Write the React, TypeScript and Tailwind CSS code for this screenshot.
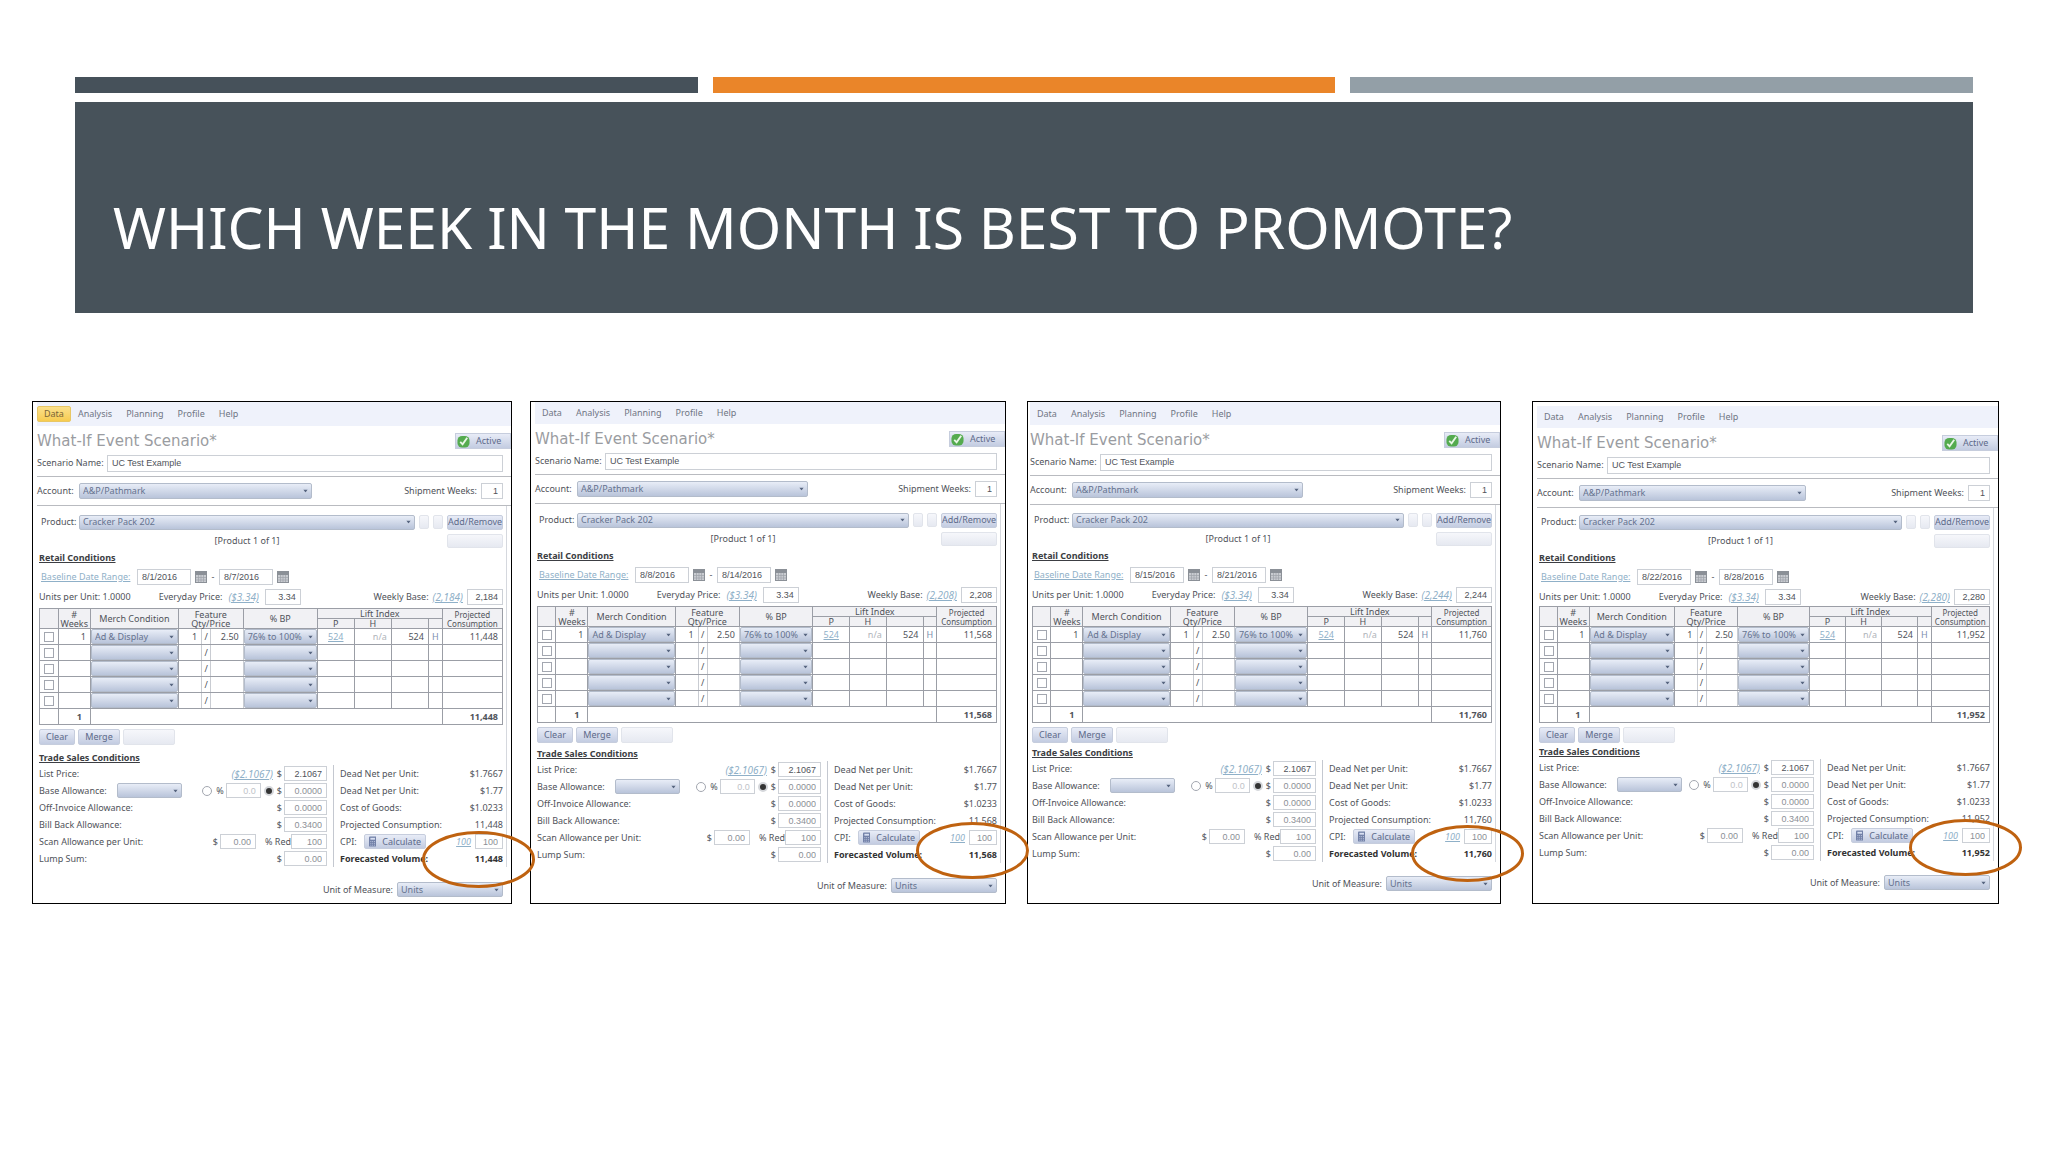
import React, { useId } from "react";
import clsx from "clsx";

interface Scenario {
  week: string;
  start: string;
  end: string;
  weeklyBase: string;
  baseLink: string;
  volume: string;
  activeTab?: string;
  // spacing differs a little from one capture to the next
  panel: string;
  inset: string;
  menu: string;
  product: string;
  table: string;
  head: string;
  trade: string;
  measure: string;
  ring: string;
}

const scenarios: Scenario[] = [
  {
    week: "week-1",
    start: "8/1/2016",
    end: "8/7/2016",
    weeklyBase: "2,184",
    baseLink: "(2,184)",
    volume: "11,448",
    activeTab: "Data",
    panel: "mr-[18px]",
    inset: "pl-1",
    menu: "h-6",
    product: "pt-2",
    table: "mt-[3px]",
    head: "h-[10px]",
    trade: "mt-[7px]",
    measure: "mt-[15px]",
    ring: "top-[429px] -right-6",
  },
  {
    week: "week-2",
    start: "8/8/2016",
    end: "8/14/2016",
    weeklyBase: "2,208",
    baseLink: "(2,208)",
    volume: "11,568",
    panel: "mr-[21px]",
    inset: "pl-1",
    menu: "h-[22px]",
    product: "pt-2",
    table: "mt-[3px]",
    head: "h-[9px]",
    trade: "mt-[5px]",
    measure: "mt-[15px]",
    ring: "top-[420px] -right-6",
  },
  {
    week: "week-3",
    start: "8/15/2016",
    end: "8/21/2016",
    weeklyBase: "2,244",
    baseLink: "(2,244)",
    volume: "11,760",
    panel: "mr-[31px]",
    inset: "pl-[2px]",
    menu: "h-[23px]",
    product: "pt-[7px]",
    table: "mt-[3px]",
    head: "h-[9px]",
    trade: "mt-1",
    measure: "mt-[14px]",
    ring: "top-[423px] -right-6",
  },
  {
    week: "week-4",
    start: "8/22/2016",
    end: "8/28/2016",
    weeklyBase: "2,280",
    baseLink: "(2,280)",
    volume: "11,952",
    panel: "",
    inset: "pl-1",
    menu: "mt-1 h-[22px]",
    product: "pt-[6px]",
    table: "mt-px",
    head: "h-[9px]",
    trade: "mt-[3px]",
    measure: "mt-[14px]",
    ring: "top-[417px] -right-6",
  },
];

const menuItems = ["Data", "Analysis", "Planning", "Profile", "Help"];

const Dropdown = ({
  id,
  label,
  value = "",
  className,
}: {
  id?: string;
  label?: string;
  value?: string;
  className?: string;
}) => {
  return (
    <span className={clsx("relative block", className)}>
      <select
        id={id}
        aria-label={label}
        defaultValue={value}
        className="block h-full w-full appearance-none rounded-[2px] border border-[#b3bccb] bg-linear-to-b from-[#e8edf7] to-[#b9c4da] pl-[3px] text-[9px] leading-3 text-[#65728f]"
      >
        <option value={value}>{value}</option>
      </select>
      <svg
        viewBox="0 0 6 4"
        className="pointer-events-none absolute top-1/2 right-1 h-[3px] w-[5px] -translate-y-1/2"
      >
        <path d="M0 0h6L3 4z" fill="#56647f" />
      </svg>
    </span>
  );
};

const TextBox = ({
  id,
  label,
  value,
  className,
}: {
  id?: string;
  label?: string;
  value: string;
  className?: string;
}) => {
  return (
    <input
      id={id}
      aria-label={label}
      defaultValue={value}
      className={clsx(
        "block min-w-0 border border-[#ccd0d6] bg-white px-1 font-['Liberation_Sans',sans-serif] text-[9px] leading-3",
        className,
      )}
    />
  );
};

const CalendarIcon = () => (
  <svg viewBox="0 0 12 12" className="h-3 w-3">
    <rect x="0.5" y="0.5" width="11" height="11" fill="#c9ccd1" stroke="#8b9097" />
    <rect x="1" y="1" width="10" height="3" fill="#8b9097" />
    <path d="M3.5 4v7M6 4v7M8.500 4v7M1 6.500h10M1 9h10" stroke="#9da2a9" strokeWidth="0.700" />
  </svg>
);

const CheckIcon = () => (
  <svg viewBox="0 0 14 14" className="h-[13px] w-[13px]">
    <rect x="0.5" y="1" width="13" height="12.500" rx="5" fill="#54ab4f" />
    <path d="M3.500 7.500l2.500 2.500 5-7" fill="none" stroke="#e9f7e6" strokeWidth="2" />
  </svg>
);

const CalculatorIcon = () => (
  <svg viewBox="0 0 8 11" className="h-[11px] w-2">
    <rect width="8" height="11" rx="1" fill="#7281a8" />
    <rect x="1.500" y="1.500" width="5" height="2" fill="#d8e0f2" />
    <path d="M1.500 5.500h5M1.500 7.500h5M1.500 9.500h5" stroke="#c0cae2" strokeDasharray="1 1" />
  </svg>
);

const buttonStyle =
  "rounded-[2px] border border-[#c6cddd] bg-linear-to-b from-[#e8ecf7] to-[#c3cce1] text-[9px] leading-3 text-[#5d6a8a]";
const disabledStyle = "rounded-[2px] border border-[#e1e4eb] bg-linear-to-b from-[#f6f7fb] to-[#e6e9f1]";
const linkStyle = "text-[#8fb0c8] underline";
const priceLink = "text-[10px] italic text-[#8fb0c8] underline";
const cell = "border border-[#9b9ea6] p-0";
const headCell = "border border-[#9b9ea6] bg-[#f1f1f4] p-0 font-normal";

const LiftTable = ({ scenario }: { scenario: Scenario }) => {
  return (
    <table
      className={clsx(
        "w-full table-fixed border-collapse text-[9px] leading-[9px]",
        scenario.table,
      )}
    >
      <colgroup>
        <col className="w-[4%]" />
        <col className="w-[7%]" />
        <col className="w-[19%]" />
        <col className="w-[5%]" />
        <col className="w-[2%]" />
        <col className="w-[7%]" />
        <col className="w-[16%]" />
        <col className="w-[8%]" />
        <col className="w-[8%]" />
        <col className="w-[8%]" />
        <col className="w-[3%]" />
        <col className="w-[13%]" />
      </colgroup>
      <thead>
        <tr className={scenario.head}>
          <th rowSpan={2} className={headCell} />
          <th rowSpan={2} className={headCell}>
            #<br />
            Weeks
          </th>
          <th rowSpan={2} className={headCell}>
            Merch Condition
          </th>
          <th rowSpan={2} colSpan={3} className={headCell}>
            Feature
            <br />
            Qty/Price
          </th>
          <th rowSpan={2} className={headCell}>
            % BP
          </th>
          <th colSpan={4} className={headCell}>
            Lift Index
          </th>
          <th rowSpan={2} className={clsx(headCell, "text-[8px]")}>
            Projected
            <br />
            Consumption
          </th>
        </tr>
        <tr className={scenario.head}>
          <th className={headCell}>P</th>
          <th className={headCell}>H</th>
          <th className={headCell} />
          <th className={headCell} />
        </tr>
      </thead>
      <tbody>
        {[0, 1, 2, 3, 4].map((row) => {
          const filled = row === 0;
          return (
            <tr key={row} className="h-4 text-right">
              <td className={cell}>
                <input
                  type="checkbox"
                  aria-label={`Select row ${row + 1}`}
                  className="mx-auto block h-[10px] w-[10px] appearance-none border border-[#a3a7b0] bg-white"
                />
              </td>
              <td className={clsx(cell, "pr-1")}>{filled && "1"}</td>
              <td className={cell}>
                <Dropdown
                  label="Merch condition"
                  value={filled ? "Ad & Display" : ""}
                  className="h-[15px] w-full"
                />
              </td>
              <td className="border border-[#c9ccd2] border-y-[#9b9ea6] p-0 pr-1">
                {filled && "1"}
              </td>
              <td className="border-y border-[#9b9ea6] p-0 text-center">/</td>
              <td className="border border-[#c9ccd2] border-y-[#9b9ea6] p-0 pr-1">
                {filled && "2.50"}
              </td>
              <td className={cell}>
                <Dropdown
                  label="Percent base price"
                  value={filled ? "76% to 100%" : ""}
                  className="h-[15px] w-full"
                />
              </td>
              <td className={clsx(cell, "text-center")}>
                {filled && (
                  <a href="#lift" className={linkStyle}>
                    524
                  </a>
                )}
              </td>
              <td className={clsx(cell, "pr-1 text-[#b0b4ba]")}>{filled && "n/a"}</td>
              <td className={clsx(cell, "pr-1")}>{filled && "524"}</td>
              <td className={clsx(cell, "text-center text-[#7d8fae]")}>{filled && "H"}</td>
              <td className={clsx(cell, "pr-1")}>{filled && scenario.volume}</td>
            </tr>
          );
        })}
        <tr className="h-4 text-right font-bold">
          <td className={cell} />
          <td className={clsx(cell, "pr-2")}>1</td>
          <td colSpan={9} className={cell} />
          <td className={clsx(cell, "pr-1")}>{scenario.volume}</td>
        </tr>
      </tbody>
    </table>
  );
};

const tradeRow = "flex h-[17px] items-center";
const amountBox = "h-[15px] w-[43px] text-right text-[#8b8f96]";

const TradeConditions = ({ scenario }: { scenario: Scenario }) => {
  const id = useId();

  return (
    <div className="flex">
      <div className="flex-1 pr-[6px]">
        <div className={tradeRow}>
          <label htmlFor={id + "list"} className="flex-1">
            List Price:
          </label>
          <a href="#list-price" className={clsx(priceLink, "mr-1")}>
            ($2.1067)
          </a>
          <span className="mr-[2px]">$</span>
          <TextBox id={id + "list"} value="2.1067" className="h-[15px] w-[43px] text-right" />
        </div>
        <div className={tradeRow}>
          <label htmlFor={id + "base"} className="w-[78px]">
            Base Allowance:
          </label>
          <Dropdown id={id + "base"} className="h-[15px] w-[65px]" />
          <span className="flex-1" />
          <input
            type="radio"
            name={id + "kind"}
            aria-label="Percent"
            className="mr-1 h-[10px] w-[10px] appearance-none rounded-full border border-[#a3a7b0]"
          />
          <span className="mr-[2px]">%</span>
          <TextBox
            label="Allowance percent"
            value="0.0"
            className="h-[15px] w-[35px] text-right text-[#c0c3c8]"
          />
          <input
            type="radio"
            name={id + "kind"}
            aria-label="Dollars"
            defaultChecked
            className="mx-[3px] h-[10px] w-[10px] appearance-none rounded-full border border-[#a3a7b0] checked:border-2 checked:border-[#d5d7db] checked:bg-[#333]"
          />
          <span className="mr-[2px]">$</span>
          <TextBox label="Allowance amount" value="0.0000" className={amountBox} />
        </div>
        <div className={tradeRow}>
          <label htmlFor={id + "off"} className="flex-1">
            Off-Invoice Allowance:
          </label>
          <span className="mr-[2px]">$</span>
          <TextBox id={id + "off"} value="0.0000" className={amountBox} />
        </div>
        <div className={tradeRow}>
          <label htmlFor={id + "bill"} className="flex-1">
            Bill Back Allowance:
          </label>
          <span className="mr-[2px]">$</span>
          <TextBox id={id + "bill"} value="0.3400" className={amountBox} />
        </div>
        <div className={tradeRow}>
          <label htmlFor={id + "scan"} className="flex-1">
            Scan Allowance per Unit:
          </label>
          <span className="mr-[2px]">$</span>
          <TextBox
            id={id + "scan"}
            value="0.00"
            className="mr-[9px] h-[15px] w-9 text-right text-[#8b8f96]"
          />
          <label htmlFor={id + "red"}>% Red</label>
          <TextBox id={id + "red"} value="100" className="h-[15px] w-9 text-right text-[#8b8f96]" />
        </div>
        <div className={tradeRow}>
          <label htmlFor={id + "lump"} className="flex-1">
            Lump Sum:
          </label>
          <span className="mr-[2px]">$</span>
          <TextBox id={id + "lump"} value="0.00" className={amountBox} />
        </div>
      </div>

      <div className="w-[170px] border-l border-[#c4c8d0] pl-[6px]">
        <div className={clsx(tradeRow, "justify-between")}>
          <span>Dead Net per Unit:</span>
          <span>$1.7667</span>
        </div>
        <div className={clsx(tradeRow, "justify-between")}>
          <span>Dead Net per Unit:</span>
          <span>$1.77</span>
        </div>
        <div className={clsx(tradeRow, "justify-between")}>
          <span>Cost of Goods:</span>
          <span>$1.0233</span>
        </div>
        <div className={clsx(tradeRow, "justify-between")}>
          <span>Projected Consumption:</span>
          <span>{scenario.volume}</span>
        </div>
        <div className={tradeRow}>
          <label htmlFor={id + "cpi"} className="w-6">
            CPI:
          </label>
          <button
            type="button"
            className={clsx(buttonStyle, "flex h-[15px] w-[62px] items-center gap-[6px] px-1")}
          >
            <CalculatorIcon />
            Calculate
          </button>
          <span className="flex-1" />
          <a href="#cpi" className={clsx(linkStyle, "mr-1 italic")}>
            100
          </a>
          <TextBox id={id + "cpi"} value="100" className="h-[15px] w-7 text-right text-[#8b8f96]" />
        </div>
        <div className={clsx(tradeRow, "justify-between font-bold text-[#333]")}>
          <span>Forecasted Volume:</span>
          <span>{scenario.volume}</span>
        </div>
      </div>
    </div>
  );
};

const ScenarioPanel = ({ scenario }: { scenario: Scenario }) => {
  const id = useId();

  return (
    <section
      className={clsx(
        "relative border border-black bg-white pb-[6px] font-['Noto_Sans',sans-serif] text-[9px] leading-3 text-[#50535a]",
        scenario.panel,
      )}
    >
      <div className={scenario.inset}>
        <nav className={clsx("flex items-center bg-[#eff2fb] text-[#6f7684]", scenario.menu)}>
          {menuItems.map((item) => (
            <a
              key={item}
              href={"#" + item.toLowerCase()}
              className={clsx(
                "rounded-[2px] border px-[6px] py-px",
                item === scenario.activeTab
                  ? "border-[#e8c765] bg-linear-to-b from-[#fbe08a] to-[#f7cc4f] text-[#7a6535]"
                  : "border-transparent",
              )}
            >
              {item}
            </a>
          ))}
        </nav>

        <div className="flex h-7 items-center justify-between pt-[2px]">
          <h2 className="font-['DejaVu_Sans',sans-serif] text-[15px] leading-4 text-[#9a9ca1]">
            What-If Event Scenario*
          </h2>
          <button
            type="button"
            className={clsx(buttonStyle, "flex h-4 w-14 items-center gap-[6px] rounded-none pl-px")}
          >
            <CheckIcon />
            Active
          </button>
        </div>

        <div className="flex h-[18px] items-center pr-2">
          <label htmlFor={id + "name"} className="w-[70px]">
            Scenario Name:
          </label>
          <TextBox id={id + "name"} value="UC Test Example" className="h-[17px] flex-1" />
        </div>

        <div className="mt-1 flex h-[30px] items-center border-y border-[#b9bbc0] pr-2">
          <label htmlFor={id + "account"} className="w-[42px]">
            Account:
          </label>
          <Dropdown id={id + "account"} value="A&P/Pathmark" className="h-4 w-1/2" />
          <span className="flex-1" />
          <label htmlFor={id + "weeks"} className="mr-1">
            Shipment Weeks:
          </label>
          <TextBox id={id + "weeks"} value="1" className="h-4 w-[22px] text-right" />
        </div>

        <div
          className={clsx("mr-1 border-r border-[#d5d8de] pr-[3px] pl-[2px]", scenario.product)}
        >
          <div className="flex h-4 items-center pl-[2px]">
            <label htmlFor={id + "product"} className="w-[38px]">
              Product:
            </label>
            <Dropdown id={id + "product"} value="Cracker Pack 202" className="h-[15px] flex-1" />
            <button
              type="button"
              aria-label="Previous product"
              className={clsx(disabledStyle, "ml-1 h-[14px] w-[10px]")}
            />
            <button
              type="button"
              aria-label="Next product"
              className={clsx(disabledStyle, "mx-1 h-[14px] w-[10px]")}
            />
            <button type="button" className={clsx(buttonStyle, "h-[15px] w-14 whitespace-nowrap")}>
              Add/Remove
            </button>
          </div>
          <div className="mt-1 flex h-[14px] items-center">
            <span className="flex-1 pl-2 text-center">[Product 1 of 1]</span>
            <button
              type="button"
              aria-label="Copy product"
              className={clsx(disabledStyle, "h-[14px] w-14")}
            />
          </div>

          <h3 className="mt-1 h-[14px] font-bold text-[#3c3e43] underline">Retail Conditions</h3>

          <div className="mt-[3px] flex h-4 items-center pl-[2px]">
            <a href="#baseline" className={clsx(linkStyle, "w-24")}>
              Baseline Date Range:
            </a>
            <TextBox label="Baseline start" value={scenario.start} className="mr-1 h-4 w-[54px]" />
            <CalendarIcon />
            <span className="w-3 text-center">-</span>
            <TextBox label="Baseline end" value={scenario.end} className="mr-1 h-4 w-[54px]" />
            <CalendarIcon />
          </div>

          <div className="mt-1 flex h-4 items-center">
            <span className="mr-7">Units per Unit: 1.0000</span>
            <label htmlFor={id + "price"} className="mr-[6px]">
              Everyday Price:
            </label>
            <a href="#price" className={clsx(priceLink, "mr-[6px]")}>
              ($3.34)
            </a>
            <TextBox id={id + "price"} value="3.34" className="h-4 w-9 text-right" />
            <span className="flex-1" />
            <label htmlFor={id + "weekly"} className="mr-1">
              Weekly Base:
            </label>
            <a href="#weekly" className={clsx(priceLink, "mr-1")}>
              {scenario.baseLink}
            </a>
            <TextBox id={id + "weekly"} value={scenario.weeklyBase} className="h-4 w-9 text-right" />
          </div>

          <LiftTable scenario={scenario} />

          <div className="mt-1 flex gap-[3px]">
            <button type="button" className={clsx(buttonStyle, "h-4 w-9")}>
              Clear
            </button>
            <button type="button" className={clsx(buttonStyle, "h-4 w-[42px]")}>
              Merge
            </button>
            <button
              type="button"
              aria-label="Unmerge"
              className={clsx(disabledStyle, "h-4 w-[52px]")}
            />
          </div>

          <h3 className={clsx("h-[13px] font-bold text-[#3c3e43] underline", scenario.trade)}>
            Trade Sales Conditions
          </h3>
          <TradeConditions scenario={scenario} />
        </div>

        <div className={clsx("flex items-center justify-end pr-2", scenario.measure)}>
          <label htmlFor={id + "measure"} className="mr-1">
            Unit of Measure:
          </label>
          <Dropdown id={id + "measure"} value="Units" className="h-[15px] w-[106px]" />
        </div>
      </div>

      <svg
        viewBox="0 0 113 57"
        className={clsx("pointer-events-none absolute z-10 h-[57px] w-[113px]", scenario.ring)}
      >
        <ellipse cx="56.500" cy="28.500" rx="55" ry="27" fill="none" stroke="#bf6210" strokeWidth="3" />
      </svg>
    </section>
  );
};

const App = () => {
  return (
    <main className="min-h-screen bg-white">
      <header className="px-[75px] pt-[77px]">
        <div className="grid grid-cols-3 gap-[15px]">
          <div className="h-4 bg-[#46515a]" />
          <div className="h-4 bg-[#ea8529]" />
          <div className="h-4 bg-[#939fa7]" />
        </div>
        <div className="mt-[9px] flex h-[211px] items-center bg-[#47525a] px-[38px] pt-[38px]">
          <h1 className="font-['Noto_Sans',sans-serif] text-[57px] leading-[64px] text-white uppercase">
            Which week in the month is best to promote?
          </h1>
        </div>
      </header>

      <div className="grid grid-cols-[498fr_497fr_505fr_467fr] pt-[88px] pr-[49px] pl-8">
        {scenarios.map((scenario) => (
          <ScenarioPanel key={scenario.week} scenario={scenario} />
        ))}
      </div>
    </main>
  );
};

export default App;
